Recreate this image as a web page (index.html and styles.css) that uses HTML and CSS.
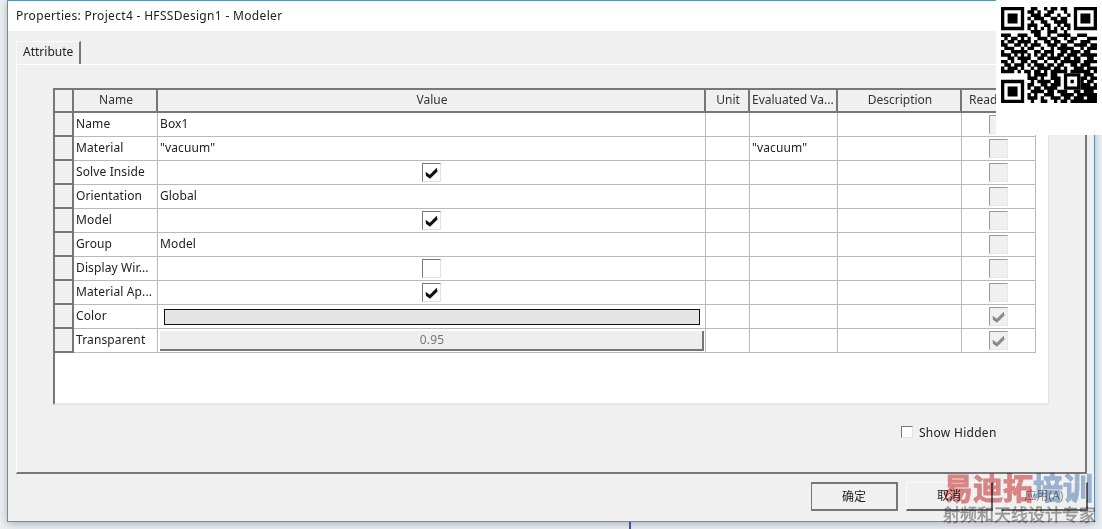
FILE: index.html
```html
<!DOCTYPE html>
<html lang="en">
<head>
<meta charset="utf-8">
<title>Properties</title>
<link rel="stylesheet" href="styles.css">
</head>
<body>
<svg class="defs" width="0" height="0" aria-hidden="true">
  <symbol id="check" viewBox="0 0 12 11"><path d="M.6 4.4 L4.4 7 L10.8 .6 L11.6 4 L4.6 10.8 L.8 8 Z"/></symbol>
</svg>
<main class="window">
  <header class="titlebar">Properties: Project4 - HFSSDesign1 - Modeler</header>
  <section class="client">
    <div class="tabs"><div class="tab">Attribute</div></div>
    <div class="pane">
      <div class="grid">
        <table class="props">
          <colgroup>
            <col class="c-row"><col class="c-name"><col class="c-value"><col class="c-unit"><col class="c-eval"><col class="c-desc"><col class="c-read">
          </colgroup>
          <thead>
            <tr><th class="rowhead"></th><th>Name</th><th>Value</th><th>Unit</th><th class="left">Evaluated Va...</th><th>Description</th><th>Read-only</th></tr>
          </thead>
          <tbody>
            <tr><th class="rowhead"></th><td>Name</td><td>Box1</td><td></td><td></td><td></td><td class="mid"><span class="box off"></span></td></tr>
            <tr><th class="rowhead"></th><td>Material</td><td>"vacuum"</td><td></td><td>"vacuum"</td><td></td><td class="mid"><span class="box off"></span></td></tr>
            <tr><th class="rowhead"></th><td>Solve Inside</td><td class="mid"><span class="box"><svg class="tick"><use href="#check"/></svg></span></td><td></td><td></td><td></td><td class="mid"><span class="box off"></span></td></tr>
            <tr><th class="rowhead"></th><td>Orientation</td><td>Global</td><td></td><td></td><td></td><td class="mid"><span class="box off"></span></td></tr>
            <tr><th class="rowhead"></th><td>Model</td><td class="mid"><span class="box"><svg class="tick"><use href="#check"/></svg></span></td><td></td><td></td><td></td><td class="mid"><span class="box off"></span></td></tr>
            <tr><th class="rowhead"></th><td>Group</td><td>Model</td><td></td><td></td><td></td><td class="mid"><span class="box off"></span></td></tr>
            <tr><th class="rowhead"></th><td>Display Wir...</td><td class="mid"><span class="box"></span></td><td></td><td></td><td></td><td class="mid"><span class="box off"></span></td></tr>
            <tr><th class="rowhead"></th><td>Material Ap...</td><td class="mid"><span class="box"><svg class="tick"><use href="#check"/></svg></span></td><td></td><td></td><td></td><td class="mid"><span class="box off"></span></td></tr>
            <tr><th class="rowhead"></th><td>Color</td><td class="pad-color"><div class="swatch"></div></td><td></td><td></td><td></td><td class="mid"><span class="box off"><svg class="tick grey"><use href="#check"/></svg></span></td></tr>
            <tr><th class="rowhead"></th><td>Transparent</td><td class="pad-btn"><div class="slider">0.95</div></td><td></td><td></td><td></td><td class="mid"><span class="box off"><svg class="tick grey"><use href="#check"/></svg></span></td></tr>
          </tbody>
        </table>
      </div>
      <label class="show"><span class="box small"></span>Show Hidden</label>
    </div>
    <footer class="buttons">
      <div class="btn default">确定</div>
      <div class="btn">取消</div>
      <div class="btn disabled">应用(A)</div>
    </footer>
  </section>
</main>
<div class="desk-line"></div>
<aside class="qr">
  <svg class="qr-code" viewBox="0 0 29 29" aria-label="QR code">
    <path class="qr-fill" fill-rule="evenodd" d="M0 0h7v7h-7z M1 1v5h5v-5z M2 2h3v3h-3z M22 0h7v7h-7z M23 1v5h5v-5z M24 2h3v3h-3z M0 22h7v7h-7z M1 23v5h5v-5z M2 24h3v3h-3z M19 20h5v5h-5z M20 21v3h3v-3z M21 22h1v1h-1z"/>
    <path class="qr-run" d="M9 .5H11M13 .5H14M15 .5H17M18 .5H20
      M8 1.5H10M11 1.5H12M14 1.5H16M19 1.5H20
      M9 2.5H12M13 2.5H15M17 2.5H18M20 2.5H21
      M8 3.5H9M10 3.5H13M15 3.5H17M18 3.5H20
      M9 4.5H10M12 4.5H14M16 4.5H20
      M8 5.5H11M13 5.5H15M17 5.5H18M19 5.5H21
      M8 6.5H9M10 6.5H11M12 6.5H13M14 6.5H15M16 6.5H17M18 6.5H19M20 6.5H21
      M9 7.5H12M14 7.5H17M19 7.5H20
      M0 8.5H3M5 8.5H8M10 8.5H12M14 8.5H15M17 8.5H21M23 8.5H26
      M1 9.5H2M3 9.5H5M6 9.5H7M8 9.5H9M11 9.5H14M15 9.5H17M19 9.5H20M21 9.5H23M26 9.5H29
      M0 10.5H1M2 10.5H4M5 10.5H9M10 10.5H11M13 10.5H15M16 10.5H18M20 10.5H22M24 10.5H27
      M0 11.5H2M4 11.5H6M7 11.5H8M9 11.5H12M14 11.5H17M18 11.5H20M22 11.5H26M27 11.5H29
      M1 12.5H4M6 12.5H7M8 12.5H10M12 12.5H13M15 12.5H16M17 12.5H22M24 12.5H25M26 12.5H29
      M0 13.5H1M3 13.5H8M10 13.5H12M13 13.5H16M18 13.5H20M21 13.5H24M25 13.5H27
      M0 14.5H3M4 14.5H5M6 14.5H7M8 14.5H9M10 14.5H11M12 14.5H14M15 14.5H16M17 14.5H19M20 14.5H23M24 14.5H29
      M2 15.5H4M5 15.5H9M11 15.5H13M14 15.5H18M19 15.5H21M22 15.5H24M26 15.5H28
      M0 16.5H2M3 16.5H4M6 16.5H8M9 16.5H11M13 16.5H14M16 16.5H17M18 16.5H24M25 16.5H29
      M1 17.5H3M4 17.5H7M8 17.5H9M10 17.5H13M14 17.5H16M17 17.5H19M21 17.5H23M24 17.5H27
      M0 18.5H1M2 18.5H5M6 18.5H7M9 18.5H10M11 18.5H15M16 18.5H18M19 18.5H20M22 18.5H25M26 18.5H29
      M0 19.5H4M5 19.5H6M7 19.5H9M10 19.5H12M13 19.5H14M15 19.5H20M21 19.5H27M28 19.5H29
      M8 20.5H9M10 20.5H14M15 20.5H17M25 20.5H28
      M8 21.5H11M12 21.5H13M15 21.5H18M24 21.5H26M27 21.5H29
      M9 22.5H10M11 22.5H15M16 22.5H18M24 22.5H25M26 22.5H28
      M8 23.5H10M12 23.5H14M15 23.5H18M24 23.5H27M28 23.5H29
      M8 24.5H9M10 24.5H12M13 24.5H17M24 24.5H29
      M9 25.5H13M14 25.5H16M17 25.5H20M22 25.5H24M25 25.5H28
      M8 26.5H9M10 26.5H11M13 26.5H16M18 26.5H22M23 26.5H29
      M8 27.5H11M12 27.5H13M15 27.5H18M19 27.5H21M22 27.5H25M26 27.5H29
      M9 28.5H10M12 28.5H14M16 28.5H17M18 28.5H20M21 28.5H29"/>
  </svg>
</aside>
<aside class="mark">
  <div class="mark-top"><span class="red">易迪拓</span><span class="blue">培训</span></div>
  <div class="mark-sub">射频和天线设计专家</div>
</aside>
</body>
</html>
```
FILE: styles.css
```css
* { box-sizing: border-box; }
html, body { height: 100%; }
body {
  margin: 0;
  overflow: hidden;
  background: #eceff2;
  font-family: "Noto Sans", "Noto Sans CJK SC", sans-serif;
  font-size: 12px;
  color: #222;
}
.defs { position: absolute; }
.window {
  display: flex;
  flex-direction: column;
  width: 1088px;
  height: 522px;
  margin-left: 7px;
  border: 1px solid #5a93b5;
  box-shadow: 0 2px 8px rgba(60, 70, 90, .35);
  background: #f0f0f0;
}
.titlebar {
  flex: none;
  height: 30px;
  padding-left: 8px;
  line-height: 29px;
  background: #fff;
  font-size: 12px;
  letter-spacing: .32px;
}
.client {
  flex: 1;
  padding: 10px 7px 0 8px;
  display: flex;
  flex-direction: column;
}
.tabs { display: flex; height: 23px; flex: none; }
.tab {
  width: 65px;
  padding-left: 6px;
  line-height: 19px;
  border-top: 1px solid #fafafa;
  border-left: 1px solid #fafafa;
  border-right: 2px solid #777;
}
.pane {
  flex: none;
  height: 410px;
  padding: 23px 0 0 36px;
  border-top: 1px solid #fff;
  border-left: 1px solid #fff;
  border-right: 2px solid #777;
  border-bottom: 2px solid #777;
}
.grid {
  width: 996px;
  height: 317px;
  background: #fff;
  border-top: 2px solid #777;
  border-left: 2px solid #777;
  border-right: 1px solid #e2e2e2;
  border-bottom: 2px solid #e6e6e6;
}
.props {
  table-layout: fixed;
  border-collapse: separate;
  border-spacing: 0;
  width: 981px;
}
.c-row { width: 19px; }
.c-name { width: 84px; }
.c-value { width: 548px; }
.c-unit { width: 44px; }
.c-eval { width: 88px; }
.c-desc { width: 124px; }
.c-read { width: 74px; }
.props th {
  height: 23px;
  padding: 0 0 2px 2px;
  font-weight: 400;
  text-align: center;
  background: #f0f0f0;
  color: #333;
  white-space: nowrap;
  overflow: hidden;
  border-right: 2px solid #777;
  border-bottom: 2px solid #777;
}
.props th.left { text-align: left; padding-left: 2px; }
.props thead th:last-child { border-right: 0; text-align: left; padding-left: 7px; }
.props tbody tr { height: 24px; }
.props tbody th.rowhead { height: 24px; }
.props td {
  height: 24px;
  padding: 0 0 2px 2px;
  white-space: nowrap;
  background: #fff;
  border-right: 1px solid #b9b9b9;
  border-bottom: 1px solid #b9b9b9;
  letter-spacing: .12px;
}
.props td.mid { padding: 0; text-align: center; }
.box {
  display: inline-flex;
  align-items: center;
  justify-content: center;
  width: 19px;
  height: 19px;
  vertical-align: middle;
  background: #fff;
  border: 1px solid #e2e2e2;
  border-top-color: #777;
  border-left-color: #777;
}
.box.off { background: #f0f0f0; border-color: #999 #e8e8e8 #e8e8e8 #999; }
.box.small { width: 12px; height: 12px; }
.tick { width: 13px; height: 12px; fill: #111; }
.tick.grey { fill: #8a8a8a; }
.props td.pad-color { padding: 0 5px 0 6px; }
.swatch { height: 16px; background: #e4e4e4; border: 1px solid #111; }
.props td.pad-btn { padding: 0 1px 0 2px; }
.slider {
  height: 20px;
  margin-top: 1px;
  padding-left: 2px;
  text-align: center;
  line-height: 17px;
  color: #777;
  background: #eee;
  border-right: 2px solid #777;
  border-bottom: 2px solid #777;
}
.show {
  display: flex;
  align-items: center;
  gap: 6px;
  width: fit-content;
  margin: 21px 0 0 848px;
  height: 12px;
  white-space: nowrap;
  letter-spacing: .28px;
}
.buttons {
  display: flex;
  justify-content: flex-end;
  gap: 8px;
  padding: 8px 0 0 0;
  margin-right: -1px;
}
.btn {
  width: 87px;
  height: 29px;
  line-height: 26px;
  text-align: center;
  border: 1px solid #fafafa;
  border-right: 2px solid #666;
  border-bottom: 2px solid #666;
}
.btn.default { border-color: #777; border-width: 2px 2px 2px 1px; }
.btn.disabled { color: #8a8a8a; }
.desk-line {
  position: absolute;
  left: 629px;
  top: 522px;
  width: 2px;
  height: 7px;
  background: #3656a3;
}
.qr {
  position: absolute;
  left: 996px;
  top: 0;
  width: 106px;
  height: 135px;
  padding: 7px 0 0 5px;
  background: #fff;
}
.qr-code { display: block; width: 96px; height: 96px; }
.qr-fill { fill: #000; }
.qr-run { fill: none; stroke: #000; stroke-width: 1.05; }
.mark {
  position: absolute;
  left: 943px;
  top: 467px;
  width: 155px;
  mix-blend-mode: multiply;
  font-family: "Noto Sans CJK SC", sans-serif;
}
.mark-top { font-size: 30px; line-height: 38px; font-weight: 700; white-space: nowrap; -webkit-text-stroke: 1px currentColor; }
.red { color: #e58c8c; }
.blue { color: #a3bcdc; }
.mark-sub { font-size: 17px; line-height: 18px; color: #a0a0a0; white-space: nowrap; -webkit-text-stroke: .4px currentColor; }
```
